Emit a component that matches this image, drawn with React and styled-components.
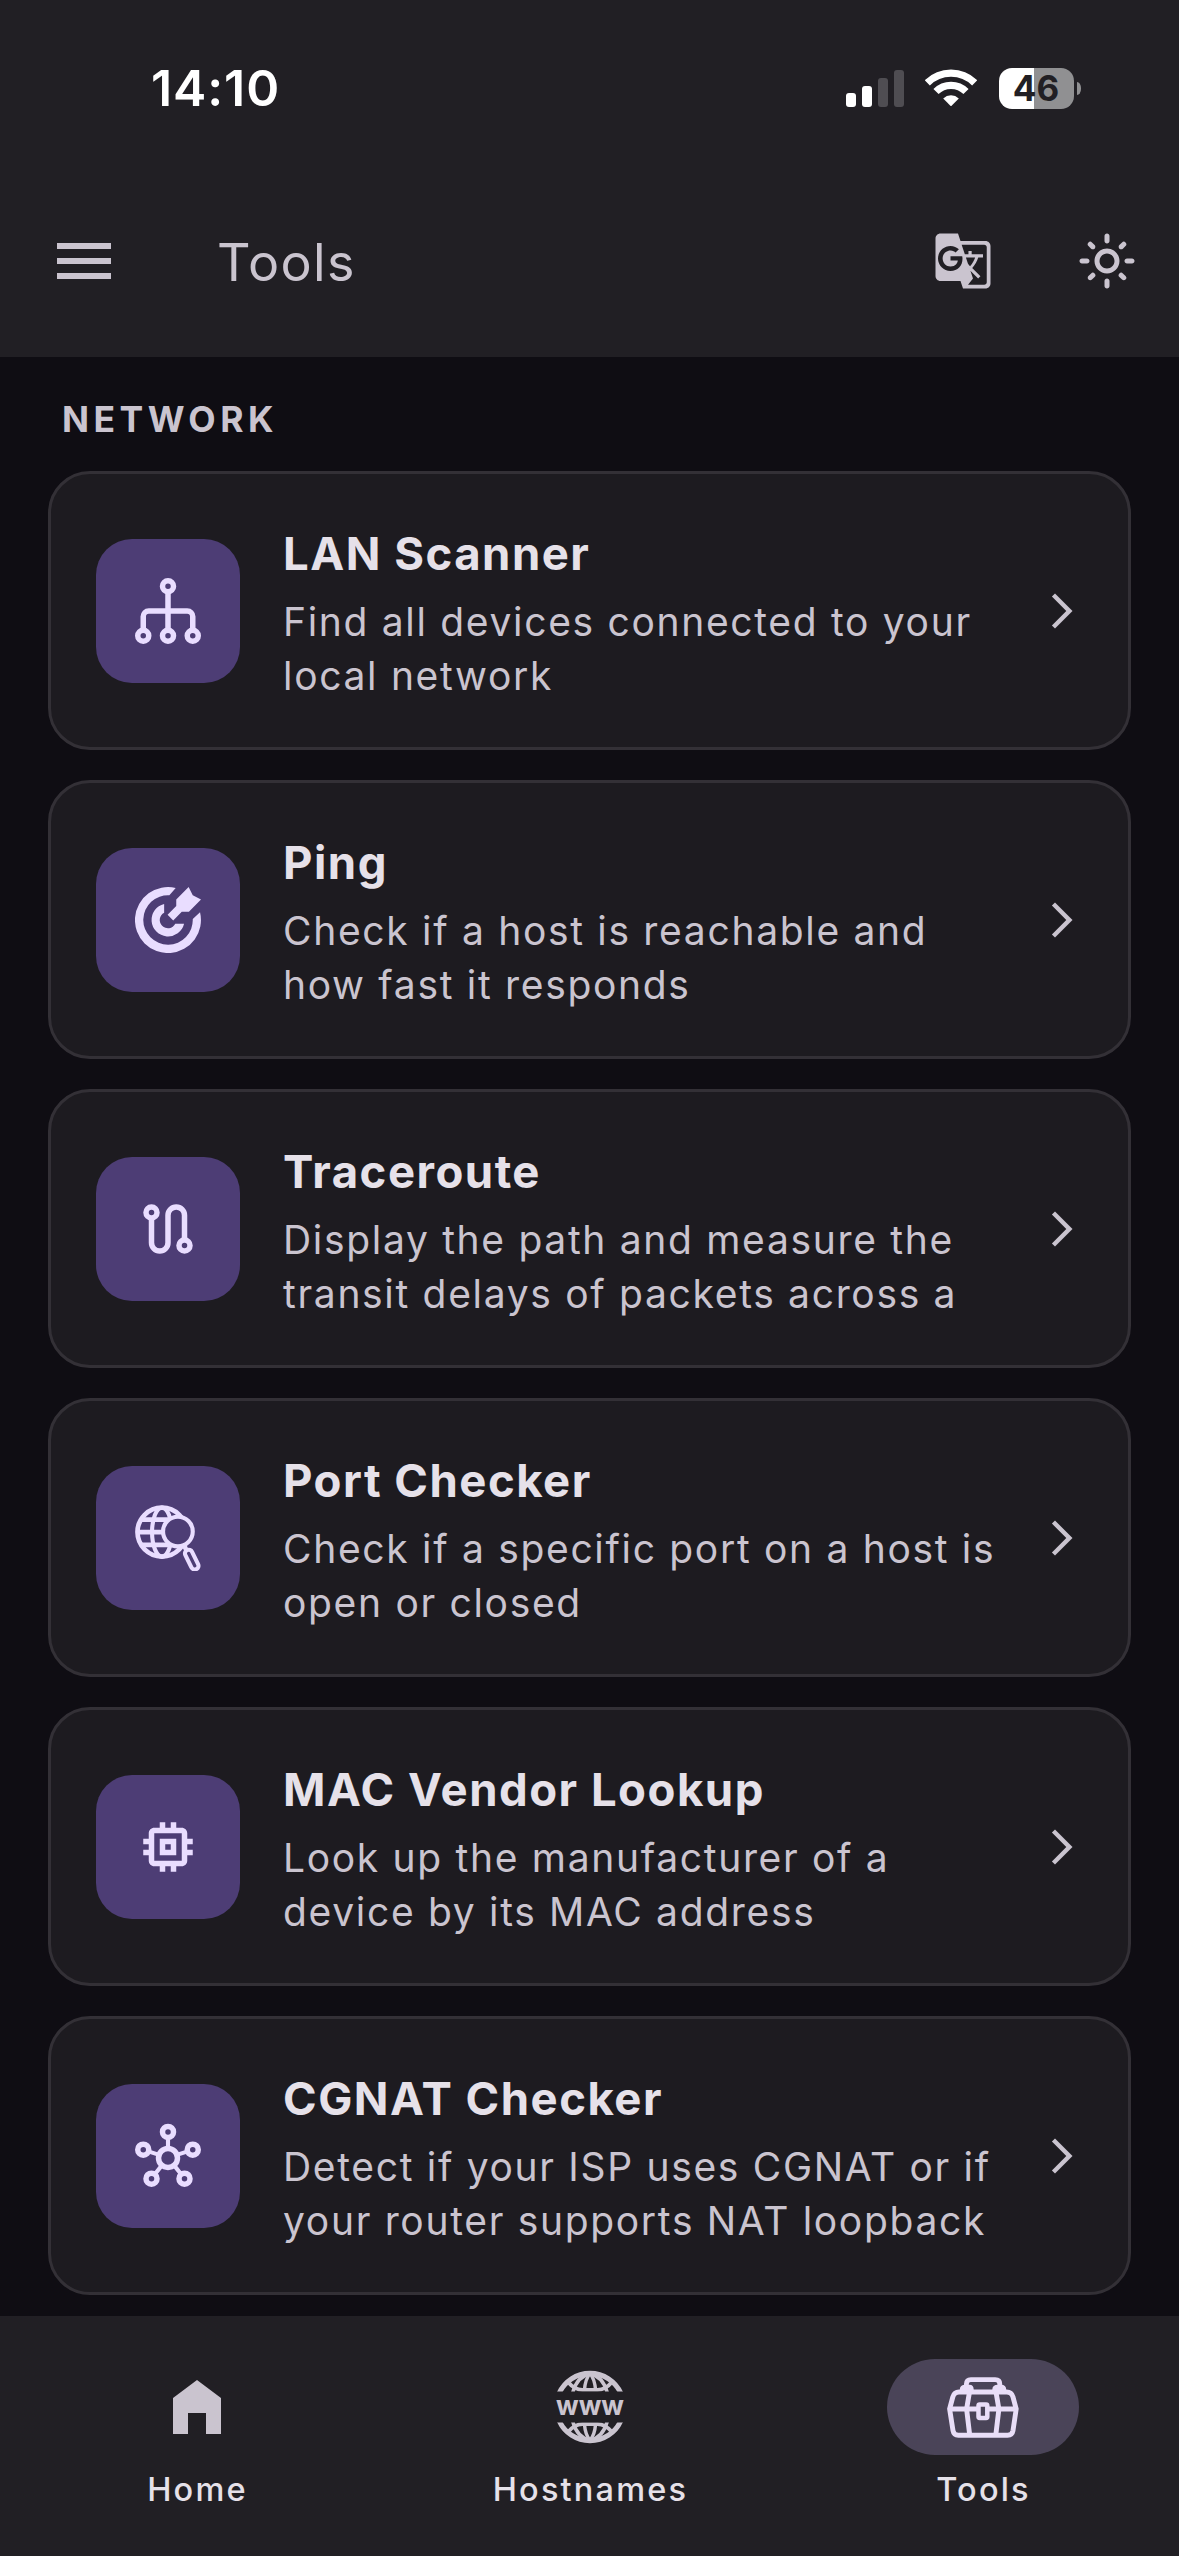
import React from 'react'
import styled, { createGlobalStyle, css, ThemeProvider } from 'styled-components'
import { MdGTranslate, MdMemory, MdMenu, MdOutlineLightMode } from 'react-icons/md'

const theme = {
  colors: {
    background: '#0f0d13',
    bar: '#211f24',
    card: '#1d1b20',
    cardBorder: '#333036',
    tile: '#4d3d75',
    onTile: '#e9ddff',
    pill: '#4a4458',
    onPill: '#e9def8',
    text: '#e6e1e9',
    textMuted: '#cac4cf',
  },
}

const GlobalStyle = createGlobalStyle`
  * {
    box-sizing: border-box;
  }

  body {
    margin: 0;
    background: #0f0d13;
    font-family: Inter, 'Liberation Sans', sans-serif;
    font-optical-sizing: none;
  }

  svg {
    display: block;
    flex: none;
  }
`

const Screen = styled.div`
  display: flex;
  flex-direction: column;
  width: 1179px;
  height: 2556px;
  overflow: hidden;
  background: ${({ theme }) => theme.colors.background};
`

const Header = styled.header`
  flex: none;
  height: 357px;
  background: ${({ theme }) => theme.colors.bar};
`

const StatusBar = styled.div`
  display: flex;
  align-items: center;
  height: 176px;
  padding: 0 98px 0 151px;
`

const Clock = styled.time`
  flex: 1;
  color: #fff;
  font-size: 50px;
  font-weight: 600;
  letter-spacing: 0.9px;
`

const SignalBars = styled.div`
  display: flex;
  align-items: flex-end;
  gap: 6px;
  height: 37px;
  margin-right: 21px;
`

const SignalBar = styled.span`
  width: 10px;
  height: ${({ $height }) => $height}px;
  border-radius: 3px;
  background: ${({ $on }) => ($on ? '#fff' : '#4f4d52')};
`

const Battery = styled.div`
  display: flex;
  align-items: center;
  gap: 3px;
  margin-left: 22px;
`

const BatteryLevel = styled.span`
  display: flex;
  align-items: center;
  justify-content: center;
  width: 75px;
  height: 41px;
  padding-right: 1px;
  border-radius: 13px;
  background: linear-gradient(to right, #fff 35px, #909092 35px);
  color: ${({ theme }) => theme.colors.bar};
  font-size: 35px;
  font-weight: 700;
  line-height: 41px;
`

const BatteryCap = styled.span`
  width: 4px;
  height: 13px;
  border-radius: 0 4px 4px 0 / 0 6px 6px 0;
  background: #909092;
`

const AppBar = styled.div`
  display: flex;
  align-items: center;
  height: 170px;
  padding: 0 0 0 48px;
  color: ${({ theme }) => theme.colors.textMuted};
`

const AppTitle = styled.h1`
  flex: 1;
  margin: 0 0 0 97px;
  padding-top: 2px;
  font-size: 52px;
  font-weight: 400;
  letter-spacing: 1.4px;
`

const BarButton = styled.button`
  display: flex;
  align-items: center;
  justify-content: center;
  width: ${({ $width }) => $width || 72}px;
  height: 72px;
  padding: 0;
  border: 0;
  background: none;
  color: inherit;
`

const Content = styled.main`
  flex: 1;
  min-height: 0;
  overflow: hidden;
  padding: 0 48px;
`

const SectionLabel = styled.h2`
  height: 114px;
  margin: 0;
  padding: 0 14px;
  color: ${({ theme }) => theme.colors.textMuted};
  font-size: 35.5px;
  font-weight: 700;
  line-height: 126px;
  letter-spacing: 4.5px;
`

const CardList = styled.div`
  display: flex;
  flex-direction: column;
  gap: 30px;
`

const Card = styled.article`
  display: flex;
  align-items: center;
  height: 279px;
  padding: 0 45px;
  border: 3px solid ${({ theme }) => theme.colors.cardBorder};
  border-radius: 42px;
  background: ${({ theme }) => theme.colors.card};
`

const Tile = styled.div`
  flex: none;
  width: 144px;
  height: 144px;
  padding: 39px;
  border-radius: 36px;
  background: ${({ theme }) => theme.colors.tile};
  color: ${({ theme }) => theme.colors.onTile};
`

const CardText = styled.div`
  flex: 1;
  margin-left: 43px;
  padding-top: 5px;
  white-space: nowrap;
`

const CardTitle = styled.h3`
  margin: 0 0 11px;
  color: ${({ theme }) => theme.colors.text};
  font-size: 45.5px;
  font-weight: 700;
  line-height: 60px;
  letter-spacing: 1.5px;
`

const CardDescription = styled.p`
  margin: 0;
  color: ${({ theme }) => theme.colors.textMuted};
  font-size: 39px;
  font-weight: 400;
  line-height: 54px;
  letter-spacing: 1.68px;
`

const NavBar = styled.nav`
  display: flex;
  flex: none;
  height: 240px;
  padding-top: 43px;
  background: ${({ theme }) => theme.colors.bar};
`

const NavItem = styled.a`
  display: flex;
  flex: 1;
  flex-direction: column;
  align-items: center;
  color: ${({ theme }) => theme.colors.textMuted};
`

const NavIcon = styled.div`
  display: flex;
  align-items: center;
  justify-content: center;
  width: 192px;
  height: 96px;
  border-radius: 48px;

  ${({ $active, theme }) =>
    $active &&
    css`
      background: ${theme.colors.pill};
      color: ${theme.colors.onPill};
    `}
`

const NavLabel = styled.span`
  margin-top: 13px;
  padding-left: 2px;
  color: ${({ theme }) => theme.colors.text};
  font-size: 32.5px;
  font-weight: 500;
  line-height: 44px;
  letter-spacing: 2.2px;
`

function WifiIcon() {
  return (
    <svg width="52" height="38" viewBox="0 0 52 38" fill="none" stroke="#fff" strokeWidth="7.3">
      <path d="M2.3 13.9a33.6 33.6 0 0 1 47.4 0" />
      <path d="M11 22.5a21.3 21.3 0 0 1 30 0" />
      <path d="M18.2 29.4a11.4 11.4 0 0 1 15.6 0L26.6 36.8a.9.9 0 0 1-1.2 0z" fill="#fff" stroke="none" />
    </svg>
  )
}

function LanIcon() {
  return (
    <svg viewBox="0 0 24 24" fill="none" stroke="currentColor" strokeWidth="2">
      <circle cx="12" cy="3" r="2" />
      <circle cx="3" cy="21" r="2" />
      <circle cx="12" cy="21" r="2" />
      <circle cx="21" cy="21" r="2" />
      <path d="M12 5v14M3 19v-5a2 2 0 0 1 2-2h14a2 2 0 0 1 2 2v5" />
    </svg>
  )
}

function PingIcon() {
  return (
    <svg viewBox="0 0 24 24" fill="currentColor">
      <path d="M14.8.35 12.5 3A9 9 0 1 0 21 11.6l2.65-2.4A12 12 0 1 1 14.8.35z" />
      <path d="M10.6 6.15v3.2a3 3 0 1 0 4.05 4.05h3.2a6 6 0 1 1-7.25-7.25z" />
      <path d="M19.5 0 21 3l3 1.5L19.6 9H17l-3.1 3.2-2.05-2.1L15 6.9V4.5z" />
    </svg>
  )
}

function RouteIcon() {
  return (
    <svg viewBox="0 0 24 24" fill="none" stroke="currentColor" strokeWidth="2">
      <circle cx="6" cy="6" r="2" />
      <circle cx="18" cy="18" r="2" />
      <path d="M6 8v9a3 3 0 0 0 6 0V7a3 3 0 0 1 6 0v9" />
    </svg>
  )
}

function PortIcon() {
  return (
    <svg viewBox="0 0 24 24" fill="none" stroke="currentColor" strokeWidth="1.7">
      <circle cx="9.8" cy="9.85" r="8.9" />
      <ellipse cx="9.8" cy="9.85" rx="3.6" ry="8.9" strokeWidth="1.5" />
      <path d="M1 9.85h15M2.2 5.3h15M2.2 14.5h15" />
      <circle cx="15.6" cy="9.65" r="5.4" fill="#4d3d75" strokeWidth="1.5" />
      <path d="m18 15 .9 1.8" />
      <rect x="19.3" y="16" width="2.7" height="7.7" rx="1.35" transform="rotate(-26 20.65 19.9)" strokeWidth="1.5" />
    </svg>
  )
}

function HubIcon() {
  return (
    <svg viewBox="0 0 24 24" fill="none" stroke="currentColor" strokeWidth="2">
      <circle cx="12" cy="3.25" r="2" />
      <circle cx="3" cy="9.7" r="2" />
      <circle cx="21" cy="9.7" r="2" />
      <circle cx="6" cy="20.25" r="2" />
      <circle cx="18" cy="20.25" r="2" />
      <circle cx="12" cy="12.7" r="3.45" />
      <path
        d="M12 5.5V9M5.4 10.5l3.4 1.1M18.6 10.5l-3.4 1.1M7.5 18.3l2.2-2.8M16.5 18.3l-2.2-2.8"
        strokeWidth="1.5"
      />
    </svg>
  )
}

function ChevronIcon() {
  return (
    <svg width="42" height="42" viewBox="0 0 24 24" fill="#cac4cf">
      <path d="M6.23 20.23 8 22l10-10L8 2 6.23 3.77 14.46 12z" />
    </svg>
  )
}

function HomeIcon() {
  return (
    <svg width="72" height="72" viewBox="0 0 24 24" fill="currentColor">
      <path d="M4 21V9l8-6 8 6v12h-5v-7H9v7z" />
    </svg>
  )
}

function HostnamesIcon() {
  const cap = (
    <>
      <path d="M-31-13.4a33.8 33.8 0 0 1 62 0" strokeWidth="5" />
      <path d="M-17.6-13C-15.5-22-10-31 0-33.5 10-31 15.5-22 17.6-13" strokeWidth="3.6" />
      <path d="M-5.6-17C-5-24-3-30 0-33.5 3-30 5-24 5.6-17" strokeWidth="3.4" />
      <path d="M-22.5-25.5q7 8.3 15 8.3h15q8 0 15-8.3" strokeWidth="3.8" />
    </>
  )

  return (
    <svg width="72" height="74" viewBox="-36 -37 72 74" fill="none" stroke="currentColor">
      <clipPath id="cap">
        <rect x="-36" y="-37" width="72" height="21.6" />
      </clipPath>
      <g clipPath="url(#cap)">{cap}</g>
      <g transform="scale(1 -1)">
        <g clipPath="url(#cap)">{cap}</g>
      </g>
      <text
        y="7.6"
        textAnchor="middle"
        textLength="68"
        lengthAdjust="spacingAndGlyphs"
        fill="currentColor"
        stroke="none"
        fontSize="27.5"
        fontWeight="700"
      >
        www
      </text>
    </svg>
  )
}

function ToolboxIcon() {
  return (
    <svg width="72" height="72" viewBox="0 0 72 72" fill="none" stroke="currentColor" strokeWidth="4.9">
      <path d="M2.6 38 5.8 26Q7.3 21 12 21h47.6q5 0 6.4 5l3.2 12-3.2 21.6q-.8 4.6-5.4 4.6H11.4q-4.6 0-5.4-4.6z" />
      <path d="M2.6 38h28M41.5 38h28" />
      <path d="M22.5 21 19.6 38l3.1 26M49 21l2.9 17-3.1 26" />
      <rect x="31.5" y="33.6" width="8.8" height="13.4" rx="1.2" strokeWidth="4.5" />
      <path d="M19.4 17v-4q0-4.4 4.4-4.4h24.4q4.6 0 4.6 4.4v4" strokeWidth="4.8" />
      <path d="M14.5 18.5q0-3 4-3h4q2.5 0 2.5 3zM47 18.5q0-3 4-3h3q3.5 0 3.5 3z" strokeWidth="3.4" />
    </svg>
  )
}

const tools = [
  { title: 'LAN Scanner', lines: ['Find all devices connected to your', 'local network'], Icon: LanIcon },
  { title: 'Ping', lines: ['Check if a host is reachable and', 'how fast it responds'], Icon: PingIcon },
  { title: 'Traceroute', lines: ['Display the path and measure the', 'transit delays of packets across a'], Icon: RouteIcon },
  { title: 'Port Checker', lines: ['Check if a specific port on a host is', 'open or closed'], Icon: PortIcon },
  {
    title: 'MAC Vendor Lookup',
    lines: ['Look up the manufacturer of a', 'device by its MAC address'],
    Icon: () => <MdMemory size={66} />,
  },
  {
    title: 'CGNAT Checker',
    lines: ['Detect if your ISP uses CGNAT or if', 'your router supports NAT loopback'],
    Icon: HubIcon,
  },
]

const tabs = [
  { label: 'Home', Icon: HomeIcon },
  { label: 'Hostnames', Icon: HostnamesIcon },
  { label: 'Tools', Icon: ToolboxIcon, active: true },
]

function ToolCard({ title, lines, Icon }) {
  return (
    <Card>
      <Tile>
        <Icon />
      </Tile>
      <CardText>
        <CardTitle>{title}</CardTitle>
        <CardDescription>
          {lines[0]}
          <br />
          {lines[1]}
        </CardDescription>
      </CardText>
      <ChevronIcon />
    </Card>
  )
}

function App() {
  return (
    <ThemeProvider theme={theme}>
      <GlobalStyle />
      <Screen>
        <Header>
          <StatusBar>
            <Clock>14:10</Clock>
            <SignalBars>
              <SignalBar $height={14} $on />
              <SignalBar $height={21} $on />
              <SignalBar $height={29} />
              <SignalBar $height={37} />
            </SignalBars>
            <WifiIcon />
            <Battery>
              <BatteryLevel>46</BatteryLevel>
              <BatteryCap />
            </Battery>
          </StatusBar>
          <AppBar>
            <BarButton type="button" aria-label="Menu">
              <MdMenu size={72} />
            </BarButton>
            <AppTitle>Tools</AppTitle>
            <BarButton type="button" aria-label="Language" $width={144}>
              <MdGTranslate size={60} />
            </BarButton>
            <BarButton type="button" aria-label="Theme" $width={144}>
              <MdOutlineLightMode size={60} />
            </BarButton>
          </AppBar>
        </Header>
        <Content>
          <SectionLabel>NETWORK</SectionLabel>
          <CardList>
            {tools.map(tool => (
              <ToolCard key={tool.title} {...tool} />
            ))}
          </CardList>
        </Content>
        <NavBar>
          {tabs.map(({ label, Icon, active }) => (
            <NavItem key={label}>
              <NavIcon $active={active}>
                <Icon />
              </NavIcon>
              <NavLabel>{label}</NavLabel>
            </NavItem>
          ))}
        </NavBar>
      </Screen>
    </ThemeProvider>
  )
}

export default App
